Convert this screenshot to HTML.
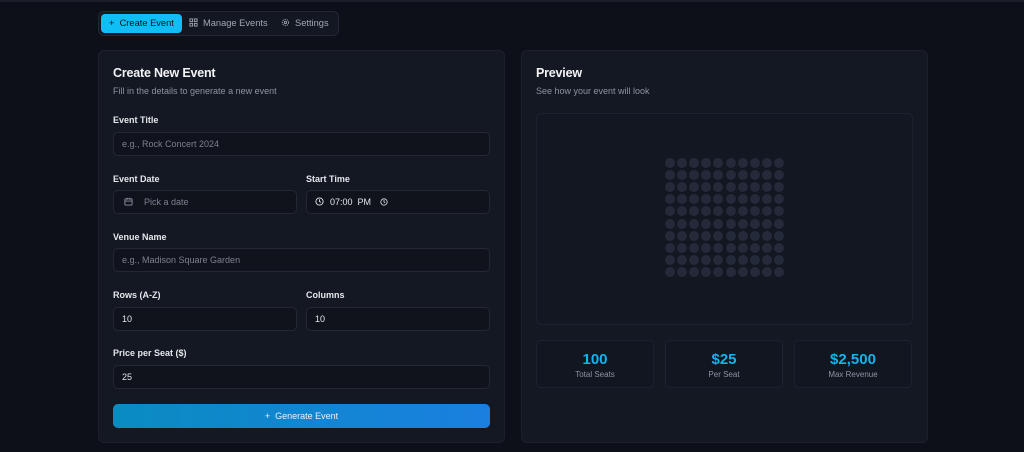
<!DOCTYPE html><html><head><style>
*{box-sizing:border-box;margin:0;padding:0}
body{width:1024px;height:452px;background:#0d1018;font-family:"Liberation Sans",sans-serif;position:relative;overflow:hidden;color:#e5e7eb}
.topline{position:absolute;left:0;top:0;width:1024px;height:2px;background:#1a1e29}
.abs{position:absolute}
.tabs{left:98px;top:11px;width:241px;height:25px;border:1px solid #232836;border-radius:6px;background:#131722}
.tab{position:absolute;top:2px;height:19px;font-size:9.3px;line-height:19px;color:#a1a7b5}
.active{left:2px;width:81px;background:#0ebef5;border-radius:4px;color:#0b1220;padding-left:8px}
.card{background:#141823;border:1px solid #1b202c;border-radius:6px}
h2{position:absolute;font-size:12.5px;font-weight:bold;color:#f3f4f6;letter-spacing:-.2px}
.sub{position:absolute;font-size:9px;color:#8b93a3}
.lbl{position:absolute;font-size:9px;font-weight:bold;color:#e5e7eb}
.inp{position:absolute;height:24px;border:1px solid #232835;border-radius:5px;background:#10131b;font-size:9px;line-height:22px;padding-left:8px;color:#7b8291}
.val{color:#e5e7eb}
.btn{left:113px;top:404px;width:377px;height:24px;border-radius:5px;background:linear-gradient(90deg,#0a8cc1,#1a7fe0);font-size:9px;line-height:24px;text-align:center;color:#e8f1fb}
.stat{position:absolute;top:340px;width:118px;height:48px;border:1px solid #1c2130;border-radius:5px;background:#121621;text-align:center}
.stat b{display:block;margin-top:10px;font-size:15px;color:#12b4ee}
.stat span{display:block;font-size:8px;color:#8b93a3;margin-top:2px}
.seat{position:absolute;width:10px;height:10px;border-radius:50%;background:#242a39}
</style></head><body>
<div class="topline"></div>
<div class="abs tabs">
<div class="tab active">+&nbsp; Create Event</div>
<div class="tab" style="left:90px"><svg width="9" height="9" viewBox="0 0 10 10" style="vertical-align:-1px;margin-right:5px" fill="none" stroke="#a1a7b5" stroke-width="1"><rect x="1" y="1" width="3" height="3"/><rect x="6" y="1" width="3" height="3"/><rect x="1" y="6" width="3" height="3"/><rect x="6" y="6" width="3" height="3"/></svg>Manage Events</div>
<div class="tab" style="left:182px"><svg width="9" height="9" viewBox="0 0 10 10" style="vertical-align:-1px;margin-right:5px" fill="none" stroke="#a1a7b5" stroke-width="1"><circle cx="5" cy="5" r="3.5" stroke-dasharray="1.5 1"/><circle cx="5" cy="5" r="1.3"/></svg>Settings</div>
</div>
<div class="abs card" style="left:98px;top:50px;width:407px;height:393px"></div>
<div class="abs card" style="left:521px;top:50px;width:407px;height:393px"></div>
<h2 style="left:113px;top:66px">Create New Event</h2>
<div class="sub" style="left:113px;top:86px">Fill in the details to generate a new event</div>
<div class="lbl" style="left:113px;top:115px">Event Title</div>
<div class="inp" style="left:113px;top:132px;width:377px">e.g., Rock Concert 2024</div>
<div class="lbl" style="left:113px;top:174px">Event Date</div>
<div class="inp" style="left:113px;top:190px;width:184px;padding-left:10px"><svg width="9" height="9" viewBox="0 0 10 10" fill="none" stroke="#8b93a3" stroke-width="1" style="vertical-align:-1px;margin-right:11px"><rect x="1" y="2" width="8" height="7" rx="1"/><path d="M1 4.5h8M3.5 1v2M6.5 1v2"/></svg>Pick a date</div>
<div class="lbl" style="left:306px;top:174px">Start Time</div>
<div class="inp val" style="left:306px;top:190px;width:184px"><svg width="9" height="9" viewBox="0 0 10 10" fill="none" stroke="#e5e7eb" stroke-width="1" style="vertical-align:-1px;margin-right:6px"><circle cx="5" cy="5" r="4"/><path d="M5 2.5V5l1.5 1"/></svg>07:00&nbsp; PM <svg width="8" height="8" viewBox="0 0 10 10" fill="none" stroke="#e5e7eb" stroke-width="1" style="vertical-align:-1px;margin-left:6px"><circle cx="5" cy="5" r="4"/><path d="M5 2.5V5l1.5 1"/></svg></div>
<div class="lbl" style="left:113px;top:232px">Venue Name</div>
<div class="inp" style="left:113px;top:248px;width:377px">e.g., Madison Square Garden</div>
<div class="lbl" style="left:113px;top:290px">Rows (A-Z)</div>
<div class="inp val" style="left:113px;top:307px;width:184px">10</div>
<div class="lbl" style="left:306px;top:290px">Columns</div>
<div class="inp val" style="left:306px;top:307px;width:184px">10</div>
<div class="lbl" style="left:113px;top:348px">Price per Seat ($)</div>
<div class="inp val" style="left:113px;top:365px;width:377px">25</div>
<div class="abs btn">+&nbsp;&nbsp;Generate Event</div>
<h2 style="left:536px;top:66px">Preview</h2>
<div class="sub" style="left:536px;top:86px">See how your event will look</div>
<div class="abs" style="left:536px;top:113px;width:377px;height:212px;border:1px solid #1c2130;border-radius:6px;background:#131722"></div>
<div id="g"></div>
<div class="stat" style="left:536px"><b>100</b><span>Total Seats</span></div>
<div class="stat" style="left:665px"><b>$25</b><span>Per Seat</span></div>
<div class="stat" style="left:794px"><b>$2,500</b><span>Max Revenue</span></div>
<script>
var h='';for(var r=0;r<10;r++)for(var c=0;c<10;c++)h+='<div class="seat" style="left:'+(665+c*12.1).toFixed(1)+'px;top:'+(158+r*12.1).toFixed(1)+'px"></div>';
document.getElementById('g').innerHTML=h;
</script>
</body></html>
